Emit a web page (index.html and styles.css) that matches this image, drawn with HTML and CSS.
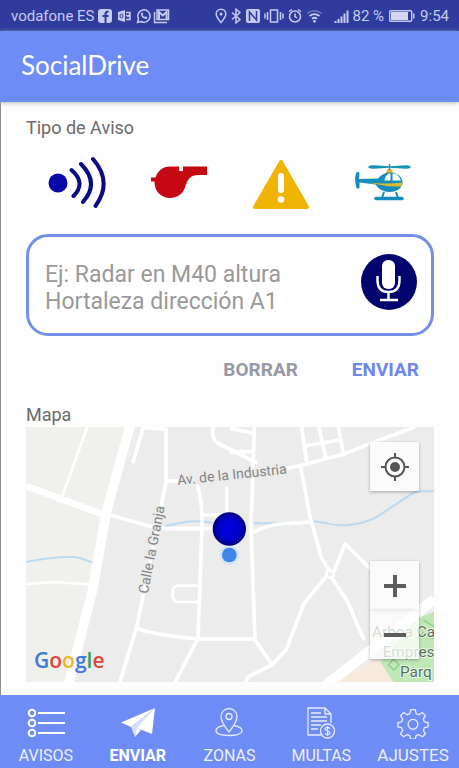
FILE: index.html
```html
<!DOCTYPE html>
<html lang="es">
<head>
<meta charset="utf-8">
<meta name="viewport" content="width=device-width, initial-scale=1">
<title>SocialDrive</title>
<link rel="stylesheet" href="styles.css">
</head>
<body>
<div class="app">
  <div class="status">
    <span class="carrier">vodafone ES</span>
    <svg class="status-left" width="74" height="16" viewBox="0 0 74 16" fill="none" stroke="#c5caf0" stroke-width="1.5" aria-hidden="true">
      <rect x="0" y="1" width="14" height="14" rx="3" fill="#c5caf0" stroke="none"/>
      <path d="M7.500 15V6q0-2.500 3-2.500M4.500 8h6" stroke="#2f3c9e" stroke-width="2"/>
      <path d="M20 4l7-2v12l-7-2z" fill="#c5caf0" stroke="none"/>
      <ellipse cx="23.500" cy="8" rx="1.500" ry="2" stroke="#2f3c9e" stroke-width="1"/>
      <path d="M28 4.500h4v7h-4M28 7l2 1.500L32 6"/>
      <path d="M39.500 14.500l1-3.500a6.200 6.200 0 1 1 2.500 2.500z"/>
      <path d="M43 5.500q0 5 5.500 5.500l1-1.500-2-1.200-1 .8q-1.500-.8-2-2l.8-1-1-1.800z" fill="#c5caf0" stroke="none"/>
      <path d="M56.500 4v10.500H69"/>
      <rect x="59" y="2" width="11.500" height="9.500"/>
      <path d="M61 11V4l3.800 3.500L68.600 4v7" stroke-width="2"/>
    </svg>
    <svg class="status-right" width="136" height="16" viewBox="0 0 136 16" fill="none" stroke="#c5caf0" stroke-width="1.500" aria-hidden="true">
      <path d="M6 14.500Q1.200 9 1.200 6a4.800 4.800 0 0 1 9.600 0q0 3-4.800 8.500z"/>
      <circle cx="6" cy="6" r="1.500" fill="#c5caf0" stroke="none"/>
      <path d="M17 4.500l8 7-4 3.300V1.200l4 3.300-8 7"/>
      <rect x="31" y="1" width="14" height="14" rx="2" fill="#c5caf0" stroke="none"/>
      <path d="M34.500 13V4l7 8V3" stroke="#2f3c9e"/>
      <rect x="55.500" y="2" width="7" height="12"/>
      <path d="M52.500 4v8M50 5.500v5M65.500 4v8M68 5.500v5"/>
      <circle cx="80" cy="8.500" r="5.500"/>
      <path d="M80 5.500v3l2 1.500M74 3.500l3-2M86 3.500l-3-2"/>
      <path d="M92 5.500q7.500-5.500 15 0" opacity=".4"/>
      <path d="M94.500 8q5-3.800 10 0M97 10.800q2.500-2 5 0" stroke-width="1.800"/>
      <circle cx="99.500" cy="13.300" r="1.400" fill="#c5caf0" stroke="none"/>
      <path d="M120.500 15v-2M123.500 15v-4M126.500 15V8.500M129.500 15V5.500M132.500 15V2.500" stroke-width="2"/>
    </svg>
    <span>82 %</span>
    <svg class="battery" width="26" height="14" viewBox="0 0 26 14" aria-hidden="true">
      <rect x=".7" y="1.700" width="22" height="10.600" rx="1" fill="none" stroke="#c5caf0" stroke-width="1.400"/>
      <path d="M2 3h17v8H2z" fill="#d5d8f4"/>
      <path d="M24 4.500h1.500v5H24z" fill="#c5caf0"/>
    </svg>
    <span>9:54</span>
  </div>

  <header class="bar"><h1>SocialDrive</h1></header>

  <main class="content">
    <h2 class="label">Tipo de Aviso</h2>
    <div class="types">
      <button type="button" aria-label="Radar">
        <svg width="60" height="56" viewBox="0 0 60 56" aria-hidden="true">
          <circle cx="11" cy="28" r="9.500" fill="#0808a8"/>
          <path d="M24.500 15q15 13 2 26M34 9q19 19 2 38M46 4q20 23 2.500 47" fill="none" stroke="#0a0a86" stroke-width="4" stroke-linecap="round"/>
        </svg>
      </button>
      <button type="button" aria-label="Control">
        <svg width="60" height="56" viewBox="0 0 60 56" aria-hidden="true">
          <path d="M21 11.500h9V16h4v-4.500h24v8.500H49c-7 0-10 4-12.500 10.500C35 38 29 43 21 43 12 43 5.500 36 5.500 27.500v-1H2v-4h4.500C8.500 16 14 11.500 21 11.500z" fill="#c60812"/>
        </svg>
      </button>
      <button type="button" aria-label="Peligro">
        <svg width="60" height="56" viewBox="0 0 60 56" aria-hidden="true">
          <path d="M30 7L56 52H4z" fill="#f0b405" stroke="#f0b405" stroke-width="4" stroke-linejoin="round"/>
          <path d="M30 21v14" stroke="#fff" stroke-width="6" stroke-linecap="round"/>
          <circle cx="30" cy="44.500" r="3.300" fill="#fff"/>
        </svg>
      </button>
      <button type="button" aria-label="Helicóptero">
        <svg width="60" height="56" viewBox="0 0 60 56" aria-hidden="true">
          <path d="M35 14l3 0 3 5H32z" fill="#d9b52e"/>
          <path d="M36.500 9v6" stroke="#5c7f86" stroke-width="1.500"/>
          <path d="M15 12q1-2 5-1.800l16 1v1.600l-16 1q-4 .2-5-1.800zM58 12q-1-2-5-1.800l-16 1v1.600l16 1q4 .2 5-1.800z" fill="#1593b5"/>
          <path d="M3 18q-2 7 .5 15 2 1.500 3-.5v-5l16 2q5 7.500 14 7.500 10 0 13-8 .5-5-3.500-8.500-4-3-9-3-7 0-12 6L6 24l.5-6q-1.500-2-3.500 0z" fill="#148cbc"/>
          <path d="M15 27.500q18 2 34.500 0l-1.500 4q-12 .5-20-1.500z" fill="#ddb92c"/>
          <path d="M31.500 25.500q.5-5 4.500-7h1.500v7zM39.500 25.500v-7q6 0 8.500 7z" fill="#fff"/>
          <path d="M31 37l-2 6M43 37l2 6" stroke="#148cbc" stroke-width="2"/>
          <path d="M23 43.500h26" stroke="#148cbc" stroke-width="3.500" stroke-linecap="round"/>
        </svg>
      </button>
    </div>

    <form class="form">
      <div class="field">
        <textarea rows="2" aria-label="Descripción del aviso" placeholder="Ej: Radar en M40 altura Hortaleza dirección A1"></textarea>
        <button class="mic" type="button" aria-label="Dictar">
          <svg width="56" height="56" viewBox="0 0 56 56" aria-hidden="true">
            <circle cx="28" cy="28" r="28" fill="#04046e"/>
            <rect x="21" y="6" width="13" height="29" rx="6" fill="#fff"/>
            <path d="M16.500 22v4.500q0 11.500 11 11.500t11-11.500V22M27.500 38v8M19 46h18" fill="none" stroke="#fff" stroke-width="2.400"/>
          </svg>
        </button>
      </div>
      <div class="actions">
        <button class="clear" type="reset">BORRAR</button>
        <button class="send" type="button">ENVIAR</button>
      </div>
    </form>

    <h2 class="label">Mapa</h2>
    <section class="map" aria-label="Mapa">
      <svg class="tiles" viewBox="78 21 1224 765" preserveAspectRatio="xMidYMid slice">
        <path d="M78 21h1224v765H78z" fill="#ececec"/>
        <path d="M78 21H380L315 290 280 480 215 786H78z" fill="#f0f1ed"/>
        <g fill="none" stroke="#b9daf0" stroke-width="6">
          <path d="M78 426q80-16 140-15c25 0 40 12 66 18M495 318c40-6 70-22 140-10M760 310h90M942 304c40 4 70 18 110 10q50-6 80-24l90-60q20-16 40-16h60"/>
        </g>
        <path d="M1302 575l-50 20-125 150 40 41h135z" fill="#bfe8b5"/>
        <path d="M1000 786l135-70 45 70z" fill="#f8eadb"/>
        <path d="M1165 735l15-18 17 18-15 15zM1245 665l25-28 32 20M1270 600l32 20" fill="none" stroke="#8fca8b" stroke-width="4"/>
        <g fill="none" stroke="#fff" stroke-linejoin="round">
          <path d="M392 10L318 280 280 500 205 796" stroke-width="29"/>
          <path d="M78 198L305 282" stroke-width="20"/>
          <path d="M320 282L460 322 500 326H640M430 22L398 130M430 22L498 28V185L470 330 410 620 360 786M498 183H535M410 625q70 24 190 32H770M592 195q16 50 14 130L594 655 525 786M600 285H680V200M640 21q-8 30 12 48l120 60" stroke-width="11"/>
          <path d="M262 21L187 228M78 492l80-6 120 8M598 497H535q-18 0-17 25 0 24 17 24H598" stroke-width="8"/>
          <path d="M690 25L760 40M690 98L758 94M763 21L753 320 765 660 815 732M753 340q50-26 90-28l85-6M905 21L920 125M957 21L977 112M1015 21L1030 100M915 78L1020 60M850 148L905 136 1030 103 1125 65 1245 21M902 140L930 290 965 415 990 455 912 550 858 690 815 735 745 770 735 790M990 465L1043 545 1092 660M1002 455L1035 372 1110 445" stroke-width="11"/>
          <path d="M978 795L1100 700 1302 538" stroke-width="31"/>
          <circle cx="990" cy="463" r="11" fill="#ececec" stroke-width="8"/>
        </g>
        <g class="street">
          <text transform="translate(533 195) rotate(-6)">Av. de la Industria</text>
          <text transform="translate(443 523) rotate(-79)">Calle la Granja</text>
        </g>
        <g class="place">
          <text x="1116" y="651">Arboa Ca</text>
          <text x="1148" y="711">Empres</text>
          <text x="1200" y="770">Parq</text>
        </g>
        <defs>
          <radialGradient id="pin"><stop offset="0" stop-color="#00d"/><stop offset=".65" stop-color="#00c"/><stop offset="1" stop-color="#000078"/></radialGradient>
        </defs>
        <circle cx="688" cy="405" r="30" fill="#d4e5f8"/>
        <circle cx="688" cy="405" r="22" fill="#3f86ea"/>
        <circle cx="688" cy="327" r="50" fill="url(#pin)"/>
      </svg>
      <div class="google" aria-label="Google"><span class="b">G</span><span class="r">o</span><span class="y">o</span><span class="b">g</span><span class="g">l</span><span class="r">e</span></div>
      <div class="controls">
        <button class="control" type="button" aria-label="Mi ubicación">
          <svg width="28" height="28" viewBox="0 0 28 28" fill="none" stroke="#555" stroke-width="2" aria-hidden="true">
            <circle cx="14" cy="14" r="9.500"/><circle cx="14" cy="14" r="5" fill="#555" stroke="none"/>
            <path d="M14 0v5M14 23v5M0 14h5M23 14h5"/>
          </svg>
        </button>
        <div class="zoom">
          <button class="control" type="button" aria-label="Acercar">
            <svg width="22" height="22" viewBox="0 0 22 22" aria-hidden="true"><path d="M11 0v22M0 11h22" stroke="#5c5c5c" stroke-width="4"/></svg>
          </button>
          <button class="control" type="button" aria-label="Alejar">
            <svg width="22" height="22" viewBox="0 0 22 22" aria-hidden="true"><path d="M0 11h22" stroke="#5c5c5c" stroke-width="4"/></svg>
          </button>
        </div>
      </div>
    </section>
  </main>

  <nav class="tabs">
    <a href="#avisos">
      <svg width="38" height="32" viewBox="0 0 38 32" fill="none" stroke="#fff" stroke-width="2" aria-hidden="true">
        <circle cx="5" cy="6" r="3.300"/><circle cx="5" cy="16" r="3.300"/><circle cx="5" cy="26" r="3.300"/>
        <path d="M11 6h27M11 16h27M11 26h27"/>
      </svg>
      AVISOS
    </a>
    <a class="current" href="#enviar" aria-current="page">
      <svg width="36" height="32" viewBox="0 0 36 32" aria-hidden="true">
        <path d="M35 1L1 15.500l10 4.500z" fill="#fff"/>
        <path d="M35 1L11 20l4 10 3-8z" fill="#d9dff8"/>
        <path d="M35 1L17 21l15 6z" fill="#fff"/>
        <path d="M17 21l-2 9 6-7z" fill="#fff"/>
      </svg>
      ENVIAR
    </a>
    <a href="#zonas">
      <svg width="32" height="32" viewBox="0 0 32 32" fill="none" stroke="#e6ebff" stroke-width="1.300" aria-hidden="true">
        <path d="M16 25Q8 15 8 9.500a8 8 0 0 1 16 0q0 5.500-8 15.500z"/>
        <circle cx="16" cy="9.500" r="3"/>
        <path d="M11 18.500Q3 20 3 23.500C3 27 9 28.500 16 28.500s13-1.500 13-5q0-3.500-8-5"/>
      </svg>
      ZONAS
    </a>
    <a href="#multas">
      <svg width="32" height="32" viewBox="0 0 32 32" fill="none" stroke="#e6ebff" stroke-width="1.300" aria-hidden="true">
        <path d="M16 28H3V1h17l6 6v9M20 1v6h6M6 6h10M6 10h16M6 14h16M6 18h10M6 22h7"/>
        <circle cx="22.500" cy="24" r="7"/>
        <path d="M25 21.500q-2.500-2-4.500-.5-1.500 2 2 3t2 3q-2 1.500-4.500-.5M22.500 19v10"/>
      </svg>
      MULTAS
    </a>
    <a class="wide" href="#ajustes">
      <svg width="32" height="32" viewBox="0 0 36 36" fill="none" stroke="#e6ebff" stroke-width="1.500" stroke-linejoin="round" aria-hidden="true">
        <path d="M15.500 3h5l1 4.500 3 1.200 4-2.500 3.500 3.500-2.400 4 1.200 3 4.200 1v4.600l-4.200 1-1.200 3 2.400 4-3.500 3.200-4-2.500-3 1.200-1 4h-5l-1-4-3-1.200-4 2.500L4 30.300l2.400-4-1.200-3-4.200-1v-4.600l4.200-1 1.200-3L4 9.700l3.500-3.500 4 2.500 3-1.200z"/>
        <circle cx="18" cy="19.500" r="5.500"/>
      </svg>
      AJUSTES
    </a>
  </nav>
</div>
</body>
</html>
```
FILE: styles.css
```css
* { box-sizing: border-box; }

body {
  margin: 0;
  background: #fdfdfe;
  font-family: Roboto, "Liberation Sans", sans-serif;
  color: #6b6b6b;
}

button {
  padding: 0;
  border: 0;
  background: none;
  font: inherit;
  color: inherit;
}

svg { display: block; flex: none; }

.app {
  display: flex;
  flex-direction: column;
  min-height: 100vh;
  box-shadow: inset 1px 0 #8b8b92;
}

.status {
  display: flex;
  align-items: center;
  height: 31px;
  padding: 0 10px 0 11px;
  background: #2f3c9e;
  color: #c5caf0;
  font-size: 15px;
  white-space: nowrap;
}

.status-left { margin-left: 3px; }
.status-right { margin-left: auto; margin-right: 1px; }
.battery { margin: 0 5px; }

.bar {
  display: flex;
  align-items: center;
  height: 71px;
  padding: 0 21px 4px;
  background: #6e8cf6;
  box-shadow: 0 1px 4px #b9bba8;
}

.bar h1 {
  margin: 0;
  font-family: Lato, sans-serif;
  font-size: 26px;
  line-height: 32px;
  font-weight: 400;
  color: #fff;
}

.content {
  flex: 1;
  padding: 15px 25px 12px 26px;
}

.label {
  margin: 0;
  font-size: 18px;
  line-height: 22px;
  font-weight: 400;
}

.types {
  display: grid;
  grid-template-columns: repeat(4, 1fr);
  justify-items: center;
  padding: 16px 0 23px;
}

.field {
  display: flex;
  align-items: center;
  height: 102px;
  padding: 0 14px 0 16px;
  border: 3px solid #7490e6;
  border-radius: 22px;
  background: #fff;
}

.field textarea {
  flex: 1;
  min-width: 0;
  height: 54px;
  margin: 6px 60px 0 0;
  padding: 0;
  border: 0;
  outline: 0;
  resize: none;
  overflow: hidden;
  background: none;
  font: 23px/27px Roboto, "Liberation Sans", sans-serif;
  color: #444;
}

.field textarea::placeholder { color: #999; opacity: 1; }

.mic { margin-bottom: 6px; }

.actions {
  display: flex;
  justify-content: flex-end;
  gap: 54px;
  padding: 23px 15px 23px 0;
  font-size: 19px;
  line-height: 22px;
  font-weight: 700;
}

.clear { color: #969aa6; }
.send { color: #6e87ec; }

.map {
  position: relative;
  height: 255px;
  margin-top: 1px;
  overflow: hidden;
}

.tiles { width: 100%; height: 100%; }
.street { font-size: 42px; fill: #858585; stroke: #ececec; stroke-width: 6px; paint-order: stroke; }
.place { font-size: 46px; fill: #4f7553; stroke: #f0f5ec; stroke-width: 6px; paint-order: stroke; }

.google {
  position: absolute;
  left: 8px;
  bottom: 8px;
  font: 600 21px/28px "Open Sans", sans-serif;
}

.b { color: #4379d8; }
.r { color: #dc453b; }
.y { color: #efb51c; }
.g { color: #35a055; }

.controls {
  position: absolute;
  top: 15px;
  right: 15px;
  bottom: 23px;
  display: flex;
  flex-direction: column;
  justify-content: space-between;
}

.control {
  display: grid;
  place-items: center;
  width: 49px;
  height: 49px;
  background: rgba(255, 255, 255, .75);
  box-shadow: 0 1px 3px rgba(0, 0, 0, .3);
}

.tabs {
  display: grid;
  grid-template-columns: repeat(5, 1fr);
  padding: 12px 0 2px;
  background: #6e8cf6;
}

.tabs a {
  display: flex;
  flex-direction: column;
  align-items: center;
  gap: 6px;
  color: #edf0ff;
  font-size: 16px;
  line-height: 21px;
  text-decoration: none;
}

.tabs .current { color: #fff; font-weight: 700; }
.tabs .wide { font-size: 17px; }
```
